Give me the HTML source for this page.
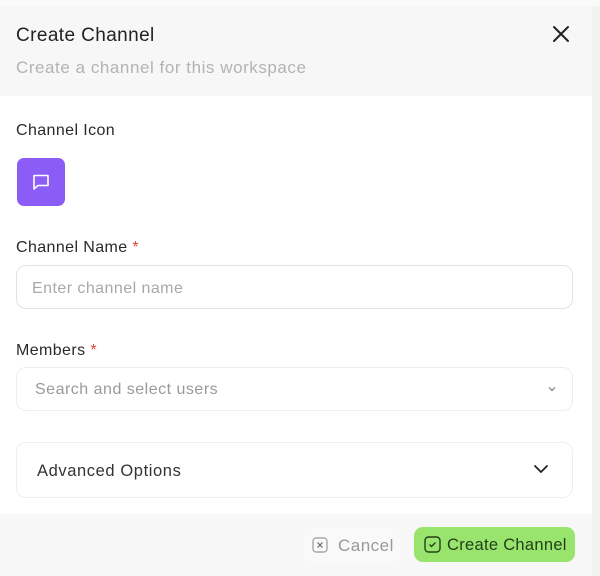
<!DOCTYPE html>
<html><head><style>
*{box-sizing:border-box;margin:0;padding:0}
body{width:600px;height:576px;background:#f2f2f2;font-family:"Liberation Sans",sans-serif;position:relative;overflow:hidden}
.modal{position:absolute;left:0;top:0;width:592px;height:576px;background:#fff}
.top{position:absolute;left:0;top:0;width:600px;height:6px;background:#fafafa}
.hdr{position:absolute;left:0;top:6px;width:592px;height:90px;background:#f7f7f7}
.t{position:absolute;left:16px;top:25px;font-size:19px;letter-spacing:0.4px;color:#222}
.st{position:absolute;left:16px;top:58px;font-size:17px;letter-spacing:0.55px;color:#b3b3b3}
.lbl{position:absolute;left:16px;font-size:16px;letter-spacing:0.4px;color:#2a2a2a}
.req{color:#e0443e}
.box{position:absolute;left:16px;width:557px;border:1px solid #e3e3e3;border-radius:10px;background:#fff}
.ph{position:absolute;font-size:16px;letter-spacing:0.45px;color:#a9a9a9}
.ftr{position:absolute;left:0;top:514px;width:592px;height:62px;background:#f7f7f7}
</style></head><body>
<div class="modal"></div>
<div class="top"></div>
<div class="hdr"></div>
<div class="t">Create Channel</div>
<div class="st">Create a channel for this workspace</div>
<svg style="position:absolute;left:552px;top:25px" width="18" height="18" viewBox="0 0 18 18"><path d="M2 2L16 16M16 2L2 16" stroke="#222" stroke-width="2" stroke-linecap="round"/></svg>
<div class="lbl" style="top:122px">Channel Icon</div>
<div style="position:absolute;left:17px;top:158px;width:48px;height:48px;border-radius:7px;background:#8b5cf6"></div>
<svg style="position:absolute;left:31px;top:172px" width="20" height="20" viewBox="0 0 20 20"><path d="M3 3.5h14v10H7l-4 3.5z" fill="none" stroke="#fff" stroke-width="1.6" stroke-linejoin="round"/></svg>
<div class="lbl" style="top:239px">Channel Name <span class="req">*</span></div>
<div class="box" style="top:265px;height:44px"></div>
<div class="ph" style="left:32px;top:280px">Enter channel name</div>
<div class="lbl" style="top:342px">Members <span class="req">*</span></div>
<div class="box" style="top:367px;height:44px;border-color:#eee"></div>
<div class="ph" style="left:35px;top:381px;color:#9a9a9a;letter-spacing:0.5px">Search and select users</div>
<svg style="position:absolute;left:547px;top:385px" width="10" height="8" viewBox="0 0 10 8"><path d="M2 2.5l3 3 3-3" fill="none" stroke="#888" stroke-width="1.3"/></svg>
<div class="box" style="top:442px;height:56px;border-color:#eee"></div>
<div class="lbl" style="left:37px;top:462px;color:#333;font-size:16.5px;letter-spacing:0.6px">Advanced Options</div>
<svg style="position:absolute;left:533px;top:463px" width="16" height="12" viewBox="0 0 16 12"><path d="M2 3l6 6 6-6" fill="none" stroke="#222" stroke-width="1.8" stroke-linecap="round"/></svg>
<div class="ftr"></div>
<div style="position:absolute;left:304px;top:527px;width:96px;height:36px;border-radius:8px;background:#f9f9fa"></div>
<svg style="position:absolute;left:312px;top:537px" width="16" height="16" viewBox="0 0 16 16"><rect x="1" y="1" width="14" height="14" rx="3" fill="none" stroke="#999" stroke-width="1.2"/><path d="M5.5 5.5l5 5M10.5 5.5l-5 5" stroke="#666" stroke-width="1.2"/></svg>
<div style="position:absolute;left:338px;top:536px;font-size:17px;letter-spacing:0.5px;color:#999">Cancel</div>
<div style="position:absolute;left:414px;top:527px;width:161px;height:35px;border-radius:9px;background:#98e46c"></div>
<svg style="position:absolute;left:424px;top:536px" width="17" height="17" viewBox="0 0 17 17"><rect x="1" y="1" width="15" height="15" rx="3.5" fill="none" stroke="#24401a" stroke-width="1.4"/><path d="M5.5 8.5l2 2 4-4" fill="none" stroke="#24401a" stroke-width="1.4"/></svg>
<div style="position:absolute;left:447px;top:536px;font-size:16.5px;letter-spacing:0.3px;color:#24401a">Create Channel</div>
</body></html>
